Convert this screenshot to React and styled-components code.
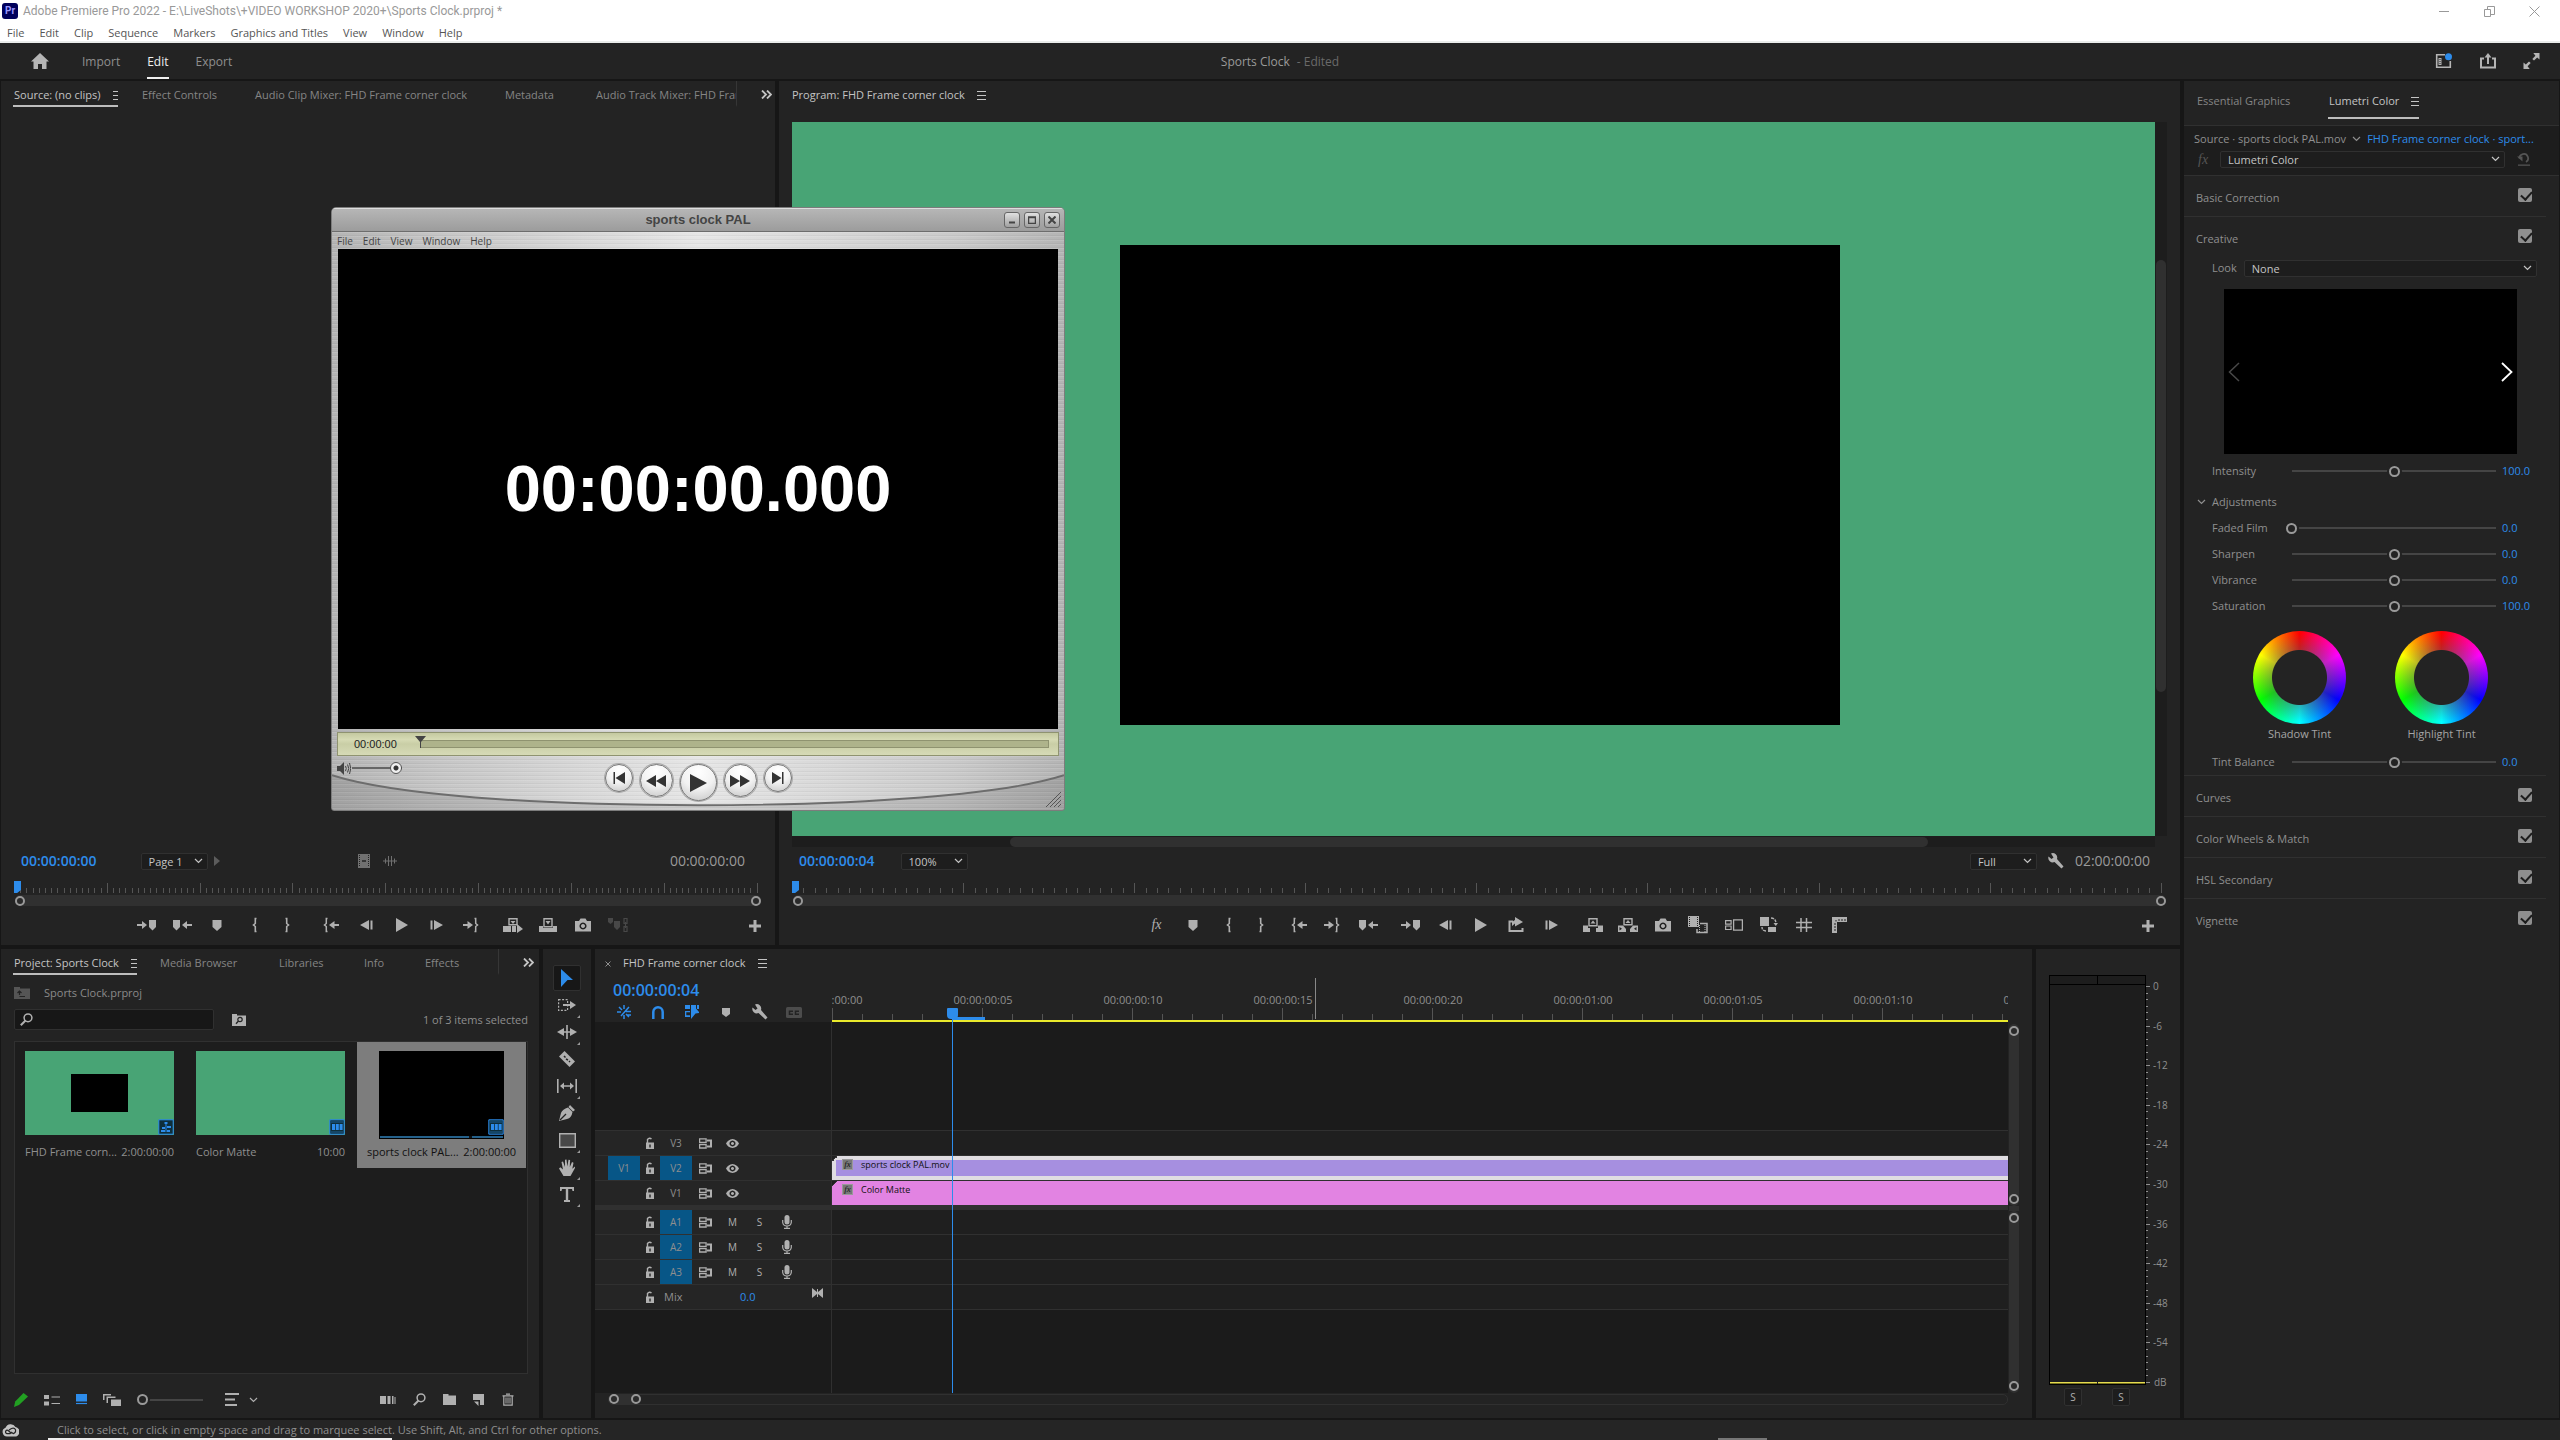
import { Fragment } from 'react';
import styled, { createGlobalStyle, css } from 'styled-components';

const BLUE = '#2d8ceb';
const PANEL = '#232323';
const DARK = '#1d1d1d';
const LINE = '#303030';
const GREEN = '#48a475';

/* ---------- icons: [width, height, drawing] ---------- */

const arrowRight = 'M0 7h5V4l5 4-5 4V9H0z';
const arrowLeft = 'M20 7h-5V4l-5 4 5 4V9h5z';

const ICONS = {
  menu: [9, 9, <path d="M0 .5h9M0 4.5h9M0 8.5h9" stroke="currentColor" />],
  more: [11, 9, <path d="M1 .5l4 4-4 4M6 .5l4 4-4 4" fill="none" stroke="currentColor" strokeWidth="1.8" />],
  chevron: [9, 6, <path d="M1 1l3.5 3.5L8 1" fill="none" stroke="currentColor" strokeWidth="1.2" />],
  home: [18, 16, <path d="M9 0L0 8.5h2.5V16H7v-5h4v5h4.5V8.5H18z" />],
  workspaces: [18, 16, <><path d="M10 1.7H1.7v12.6h13.6V8" fill="none" stroke="currentColor" strokeWidth="1.6" /><path d="M3.5 5h3v7h-3z" /><path d="M5 6v1M5 8v1M5 10v1" stroke="#232323" /><circle cx="13.5" cy="3.8" r="3.5" fill={BLUE} /></>],
  share: [18, 16, <><path d="M5 5.5H2v9h14v-9h-3" fill="none" stroke="currentColor" strokeWidth="2" /><path d="M8 3.5h2V11H8z" /><path d="M9 0l3.5 4.5h-7z" /></>],
  fullscreen: [17, 16, <><path d="M16.500 0v6.500L14.200 4.400 11 7.500 9.300 5.900l3.100-3.200L10.300 0z" /><path d="M.5 16V9.500l2.300 2.100L6 8.500l1.700 1.600-3.100 3.200L6.700 16z" /></>],
  minimize: [11, 11, <path d="M0 5.5h10" stroke="currentColor" />],
  restore: [11, 11, <path d="M.5 3.5h6v7h-6zM3.5 3V.5h7v8H7" fill="none" stroke="currentColor" />],
  close: [11, 11, <path d="M.5.5l10 10M10.5.5l-10 10" fill="none" stroke="currentColor" />],
  smallClose: [6, 6, <path d="M.5.5l5 5M5.5.5l-5 5" fill="none" stroke="currentColor" />],
  film: [12, 14, <><path d="M0 0h12v14H0z" /><path d="M1.500 1v12M10.500 1v12" stroke="#232323" strokeDasharray="1 1" /><path d="M4 7h4" stroke="#232323" strokeWidth="1.5" /></>],
  wave: [14, 12, <path d="M0 6h14M2.5 3.5v5M5.5 1v10M8.5 1v10M11.5 3.5v5" stroke="currentColor" />],
  playSmall: [6, 10, <path d="M0 0l6 5-6 5z" />],
  marker: [10, 12, <path d="M.5 1h9v7L5 12 .5 8z" />],
  toMarker: [20, 16, <><path d={arrowRight} /><path d="M12 3h7v7l-3.5 3.5L12 10z" /></>],
  fromMarker: [20, 16, <><path d={arrowLeft} /><path d="M1 3h7v7l-3.5 3.5L1 10z" /></>],
  markIn: [6, 16, <path d="M4.5 1.5H3.3v5L1.5 8l1.8 1.5v5h1.2" fill="none" stroke="currentColor" strokeWidth="1.6" />],
  markOut: [6, 16, <path d="M1.5 1.5h1.2v5L4.5 8 2.7 9.5v5H1.5" fill="none" stroke="currentColor" strokeWidth="1.6" />],
  goIn: [16, 16, <><path d="M4.5 1.5H3.3v5L1.5 8l1.8 1.5v5h1.2" fill="none" stroke="currentColor" strokeWidth="1.5" /><path d="M16 7h-4.5V4L6 8l5.5 4V9H16z" /></>],
  goOut: [16, 16, <><path d="M11.5 1.5h1.2v5L14.5 8l-1.8 1.5v5h-1.2" fill="none" stroke="currentColor" strokeWidth="1.5" /><path d="M0 7h4.5V4L10 8l-5.5 4V9H0z" /></>],
  stepBack: [13, 12, <path d="M9 1v10L0 6zM10.5 1.5h2v9h-2z" />],
  play: [13, 14, <path d="M1 0l12 7-12 7z" />],
  stepForward: [13, 12, <path d="M4 1v10l9-5zM.5 1.5h2v9h-2z" />],
  insert: [20, 16, <><path d="M6 1.7h8v6H6z" fill="none" stroke="currentColor" strokeWidth="1.4" /><path d="M7.5 4h5L10 7z" /><path d="M0 9h8v6H0zM9 9h4v6H9zM14 7l6 5-6 4z" /></>],
  overwrite: [18, 16, <><path d="M5 1.7h8v8H5z" fill="none" stroke="currentColor" strokeWidth="1.4" /><path d="M6.5 4h5L9 7.5z" /><path d="M0 9h4v2h10V9h4v6H0z" /></>],
  camera: [16, 14, <path fillRule="evenodd" d="M0 3h4l1.5-2.5h5L12 3h4v10.5H0zM8 4.5a3.5 3.5 0 1 0 .01 0zM8 6a2 2 0 1 1-.01 0z" />],
  linkMarkers: [20, 16, <><path d="M0 1h5v4L2.5 7 0 5zM6 4h6v6l-3 3-3-3z" /><path d="M16 1.5h3v5h-3zM16 9.5h3v5h-3zM17.5 5v6" fill="none" stroke="currentColor" strokeWidth="1.2" /></>],
  plus: [12, 12, <path d="M4.5 0h3v4.5H12v3H7.5V12h-3V7.5H0v-3h4.5z" />],
  lift: [20, 16, <><path d="M6 1.7h8v7H6z" fill="none" stroke="currentColor" strokeWidth="1.4" /><path d="M7.5 6.5h5L10 3.5z" /><path d="M0 8.5h5V11h2v4H0zM15 8.5h5V15h-7v-4h2z" /></>],
  extract: [20, 16, <><path d="M6 1.7h8v6H6z" fill="none" stroke="currentColor" strokeWidth="1.4" /><path d="M7.5 6h5L10 3z" /><path fillRule="evenodd" d="M0 8.5h5L8 12v3H0zM1.5 10v3.5L4 11.700zM20 8.5h-5L12 12v3h8zM18.5 10v3.5L16 11.700z" /></>],
  exportClip: [16, 15, <><path d="M5 4.5H1.5V14h13v-3" fill="none" stroke="currentColor" strokeWidth="2" /><path d="M7 0l8 5-8 4.5V6.500L4 9V5l3-2z" /></>],
  proxies: [20, 18, <><path d="M0 0h11v11H0z" /><path d="M1.5 1v9M9.5 1v9" stroke="#232323" strokeDasharray="1 1" /><path d="M12 7.5h7v9h-10V13" fill="none" stroke="currentColor" strokeWidth="1.5" /><path d="M11.5 9v7M17 9v7" stroke="currentColor" strokeDasharray="1 1" /></>],
  comparison: [18, 12, <><path d="M.6 1.600h5.500v3.500H.6zM.6 7h5.500v3.500H.6z" fill="none" stroke="currentColor" strokeWidth="1.2" /><path d="M8.600.8h8.800v10.400H8.600z" fill="none" stroke="currentColor" strokeWidth="1.3" /></>],
  toggleProxy: [18, 17, <><path d="M0 1h9v9H0zM8 11h8v5H8z" /><path d="M11 2q5 0 5 6M6 15q-4 0-4-4" fill="none" stroke="currentColor" strokeWidth="1.4" strokeDasharray="3 1" /><path d="M13.5 7h4.5l-2.200 3z" /></>],
  guides: [16, 16, <path d="M5 1v14M10.5 1v14M0 5.5h16M0 10.5h16" stroke="currentColor" strokeWidth="1.5" />],
  ruler: [16, 16, <><path d="M1 0h15v5H6v11H1z" /><path d="M5 3v1.5M8 2v2M11 2v2M14 2v2M3 7h2M3 10h2M3 13h2" stroke="#232323" /></>],
  wrench: [16, 16, <path d="M3 .5a4.5 4.5 0 0 1 6 5.500l6.500 7.500-2 2L6.500 9A4.500 4.500 0 0 1 .5 3.500l3 2.500 2-1.500z" />],
  reset: [14, 13, <><path d="M2.5 5.500A4.300 4.300 0 1 1 9 9" fill="none" stroke="currentColor" strokeWidth="1.8" /><path d="M0 3.500h5.500V8.500zM1 11.500h12v1.300H1z" /></>],
  prev: [12, 20, <path d="M11 1L1.5 10 11 19" fill="none" stroke="currentColor" strokeWidth="1.5" />],
  next: [12, 20, <path d="M1 1l9.5 9L1 19" fill="none" stroke="currentColor" strokeWidth="1.8" />],
  folderUp: [16, 12, <><path d="M0 0h6v1.5h10V12H0z" /><path d="M5.5 8V4.5M3.5 6l2-2 2 2M5.5 9.5H11" fill="none" stroke="#232323" strokeWidth="1.2" /></>],
  search: [13, 13, <><circle cx="8" cy="4.8" r="3.9" fill="none" stroke="currentColor" strokeWidth="1.5" /><path d="M5.5 7.500L.8 12.200" stroke="currentColor" strokeWidth="2" /></>],
  folderSearch: [14, 12, <><path d="M0 0h5v1.5h9V12H0z" /><circle cx="8" cy="5.5" r="2.2" fill="none" stroke="#232323" strokeWidth="1.2" /><path d="M6.5 7L4 9.700" stroke="#232323" strokeWidth="1.3" /></>],
  folder: [13, 11, <path d="M0 0h5.5v1.5H13V11H0z" />],
  pencil: [14, 14, <path fill="#22a022" d="M9.5 0L14 3.5 5 12l-5 2 1.2-5.5z" />],
  listView: [16, 12, <><path d="M0 1h5v4H0zM0 7.5h5v4H0z" /><path d="M7.5 3H16M7.5 9.5H16" stroke="currentColor" strokeWidth="1.2" /></>],
  iconView: [11, 11, <><path d="M0 0h11v7.5H0z" /><path d="M0 9.5h11" stroke="currentColor" strokeWidth="1.2" /></>],
  freeform: [18, 12, <path d="M0 0h8v1.500H1.500V6H0zM3.500 2.500h9V4h-7.500v5H3.500zM8 5.500h10V12H8z" />],
  sort: [14, 13, <path d="M0 1h14M0 6.500h10M0 12h12" stroke="currentColor" strokeWidth="2" />],
  automate: [16, 10, <path d="M0 1h6v8H0zM7.5 1h3v8h-3zM12 1h1.5v8H12zM14.500 2h1v7h-1z" />],
  newItem: [12, 12, <path d="M0 0h11v11H7V6H0zM1 7.5h4.5V12z" />],
  trash: [12, 13, <><path d="M4 1.200h4M.5 2.800h11M1.800 3v9.200h8.400V3" fill="none" stroke="currentColor" strokeWidth="1.2" /><path d="M4 4.5v6M6 4.5v6M8 4.5v6" stroke="currentColor" /></>],
  seqBadge: [16, 16, <><path d="M.8.8h14.400v14.400H.8z" fill="#0e2f3b" stroke={BLUE} /><path fill={BLUE} d="M6.500 3h3v2h-3zM7.500 5h1v8h-1zM4 8h3v2H4zM9 7h4v2H9zM3 11h4v2H3zM9 11h3v2H9z" /></>],
  clipBadge: [16, 16, <><path d="M.8.8h14.400v14.400H.8z" fill="#0e2f3b" stroke={BLUE} /><path fill={BLUE} d="M3 5h3v6H3zM6.800 5h3v6h-3zM10.600 5h3v6h-3z" /><path d="M2.500 3h11M2.500 13h11" stroke={BLUE} strokeDasharray="1 1" /></>],
  selection: [12, 18, <path d="M0 0l12 11H6.5L0 18z" />],
  trackSelect: [18, 12, <><path d="M.6.6h9v10.800h-9z" fill="none" stroke="currentColor" strokeDasharray="2 1.5" strokeWidth="1.2" /><path d="M5 5h7V2l6 4-6 4V7H5z" /></>],
  ripple: [20, 14, <><path d="M9.200 0h1.600v14H9.200zM7 3v8L0 7zM13 3v8l7-4z" /><path d="M5 7h10" stroke="currentColor" strokeWidth="1.5" /></>],
  razor: [16, 16, <><path d="M5.500 0L16 10.500 10.500 16 0 5.500z" /><path d="M5 5l1.500 1.500M7 8l2 1M10 10l1 1" stroke="#232323" strokeWidth="1.5" /></>],
  slip: [20, 14, <><path d="M.8 0v14M19.200 0v14" stroke="currentColor" strokeWidth="1.6" /><path d="M3 7l4-3.500v2.700h6V3.500L17 7l-4 3.500V7.800H7v2.700z" /></>],
  pen: [16, 16, <><path d="M11 0l5 5-2 1.500-4.500-4.500zM9 2.500L13.500 7q-1 6-5.500 7L0 16l2-8q1.500-4 7-5.500z" /><path d="M1 15l6-6" stroke="#232323" strokeWidth="1.2" /></>],
  rectangle: [17, 15, <path d="M.7.7h15.600v13.600H.7z" fill="#484848" stroke="currentColor" strokeWidth="1.4" />],
  hand: [16, 17, <path d="M4.500 17L0 9.500 1.300 8.300 4 10.500 2.500 3l1.500-.6 2 5.600V.8L7.500.5 8.300 7.500 9.500.8l1.600.3-.3 7L13 3l1.500.7-1.200 6L16 7.500V9l-4.500 8z" />],
  type: [14, 15, <path d="M0 0h14v4h-1.500L12 2H8.200v11H10v2H4v-2h1.800V2H2l-.5 2H0z" />],
  nest: [14, 14, <path d="M7 0v4M7 10v4M0 7h4M9 6.500h5M2 2l3 3M12 2L4 11M9 9l3 3M10 10h4" stroke="currentColor" strokeWidth="1.5" />],
  magnet: [12, 13, <path d="M1.300 13V6a4.700 4.700 0 0 1 9.400 0v7" fill="none" stroke="currentColor" strokeWidth="2.5" />],
  linked: [14, 14, <><path d="M0 0h5v4H0zM0 6h5v1.300H1.300v3H5V12H0zM12 0h2v4h-2z" /><path d="M6 0h5v3.500L14 7v1l-3.500.5L6 14z" /></>],
  shield: [8, 9, <path d="M0 0h8v6L4 9 0 6z" />],
  captions: [16, 11, <><rect width="16" height="11" rx="1.5" /><path d="M7 4.200H3.500v3H7M13 4.200H9.500v3H13" fill="none" stroke="#232323" strokeWidth="1.5" /></>],
  lock: [8, 12, <><path d="M1.500 6V2.500Q3.500.2 5.500 2" fill="none" stroke="currentColor" strokeWidth="1.4" /><path fillRule="evenodd" d="M0 5.500h8V12H0zM3.300 7.500v3h1.400v-3z" /></>],
  sync: [13, 11, <><path d="M.6.9h6.500v3.500H.6zM.6 6.500h6.500V10H.6z" fill="none" stroke="currentColor" strokeWidth="1.3" /><path d="M8 2.500h4v6H8" fill="none" stroke="currentColor" strokeWidth="2" /></>],
  eye: [13, 9, <path fillRule="evenodd" d="M6.500 0Q11 .5 13 4.500 11 8.500 6.500 9 2 8.500 0 4.500 2 .5 6.500 0zm0 1.500a3 3 0 1 0 .01 0zm0 1.500a1.500 1.500 0 1 1-.01 0z" />],
  mic: [10, 14, <><rect x="2.5" width="5" height="9.5" rx="2.5" /><path d="M.7 5v2.500q.5 3.500 4.300 3.500t4.300-3.500V5M5 11v2M2 13.300h6" fill="none" stroke="currentColor" strokeWidth="1.2" /></>],
  bowtie: [11, 10, <path d="M0 0l5 4V1h1v3l5-4v10L6 6v3H5V6l-5 4z" />],
  cloud: [17, 14, <><path d="M5 13.500a4.500 4.500 0 0 1-1.500-8.700A5.500 5.500 0 0 1 13.500 4 4.800 4.800 0 0 1 12 13.500z" /><path d="M9 10L6.500 7.700Q4.800 6.500 3.700 8q-.6 2 1.300 2.700h3L10 9.500M7 7l2.500-1.500q3-1 4 1.200.7 3-2.300 3.900l-2-1.600" fill="none" stroke="#252525" strokeWidth="1.2" /></>],
  speaker: [14, 13, <><path d="M0 4h3l4-4v13L3 9H0z" /><path d="M8.500 4q1.500 2.500 0 5M10.500 2.500q2.500 4 0 8M12.500 1q2.500 5.500 0 11" fill="none" stroke="currentColor" /></>],
  qtStart: [12, 12, <path d="M.5 0H2v12H.5zM12 0v12L2.500 6z" />],
  qtRewind: [20, 12, <path d="M10 0v12L0 6zM20 0v12L10 6z" />],
  qtPlay: [17, 18, <path d="M0 0l17 9-17 9z" />],
  qtForward: [20, 12, <path d="M0 0v12l10-6zM10 0v12l10-6z" />],
  qtEnd: [12, 12, <path d="M10 0h1.500v12H10zM0 0v12l9.500-6z" />],
};

const Icon = ({ name }) => {
  const [w, h, drawing] = ICONS[name];
  return (
    <Glyph width={w} height={h} viewBox={`0 0 ${w} ${h}`} fill="currentColor" aria-hidden="true">
      {drawing}
    </Glyph>
  );
};

const Dropdown = ({ label, value, width }) => (
  <SelectBox $width={width}>
    <select aria-label={label} defaultValue={value}>
      <option>{value}</option>
    </select>
    <Icon name="chevron" />
  </SelectBox>
);

const Ruler = () => (
  <RulerBox>
    <PlayheadFlag />
    {Array.from({ length: 120 }, (_, i) => (
      <RulerTick key={i} $major={i % 15 === 0 && i > 0} />
    ))}
    <LastTick />
  </RulerBox>
);

const Transport = ({ items }) => (
  <TransportBar>
    <TransportKeys>
      {items.map(([name, gap = 11]) => (
        <TransportButton key={name} type="button" aria-label={name} $gap={gap} $dim={name === 'linkMarkers'}>
          {name === 'fx' ? <FxText>fx</FxText> : <Icon name={name} />}
        </TransportButton>
      ))}
    </TransportKeys>
    <PlusButton type="button" aria-label="Button editor">
      <Icon name="plus" />
    </PlusButton>
  </TransportBar>
);

/* ---------- header ---------- */

const TitleBar = () => (
  <WindowTop>
    <WindowTitle>
      <Logo>Pr</Logo>
      <span>Adobe Premiere Pro 2022 - E:\LiveShots\+VIDEO WORKSHOP 2020+\Sports Clock.prproj *</span>
      <WindowButtons>
        {['minimize', 'restore', 'close'].map((n) => (
          <button key={n} type="button" aria-label={n}>
            <Icon name={n} />
          </button>
        ))}
      </WindowButtons>
    </WindowTitle>
    <MenuRow>
      {['File', 'Edit', 'Clip', 'Sequence', 'Markers', 'Graphics and Titles', 'View', 'Window', 'Help'].map((m) => (
        <button key={m} type="button">{m}</button>
      ))}
    </MenuRow>
  </WindowTop>
);

const Header = () => (
  <HeaderBar>
    <HeaderNav>
      <HomeButton type="button" aria-label="Home"><Icon name="home" /></HomeButton>
      <NavButton type="button">Import</NavButton>
      <NavButton type="button" $active>Edit</NavButton>
      <NavButton type="button">Export</NavButton>
    </HeaderNav>
    <ProjectTitle>Sports Clock <span>- Edited</span></ProjectTitle>
    <HeaderActions>
      {['workspaces', 'share', 'fullscreen'].map((n) => (
        <button key={n} type="button" aria-label={n}><Icon name={n} /></button>
      ))}
    </HeaderActions>
  </HeaderBar>
);

/* ---------- monitors ---------- */

const SOURCE_KEYS = [
  ['toMarker', 0], ['fromMarker'], ['marker'], ['markIn', 14], ['markOut', 8], ['goIn', 20], ['stepBack'],
  ['play'], ['stepForward'], ['goOut'], ['insert', 18], ['overwrite'], ['camera'], ['linkMarkers'],
];

const PROGRAM_KEYS = [
  ['fx', 0], ['marker', 12], ['markIn', 12], ['markOut', 8], ['goIn', 14], ['goOut', 9], ['fromMarker', 12],
  ['toMarker', 19], ['stepBack'], ['play'], ['exportClip'], ['stepForward', 12], ['lift', 17], ['extract'],
  ['camera'], ['proxies'], ['comparison', 12], ['toggleProxy'], ['guides'], ['ruler'],
];

const SourceMonitor = () => (
  <SourcePanel>
    <TabBar $cols="128px 113px 250px 91px 142px 1fr">
      <Tab type="button" $active $width={105}>Source: (no clips) <Icon name="menu" /></Tab>
      <Tab type="button">Effect Controls</Tab>
      <Tab type="button">Audio Clip Mixer: FHD Frame corner clock</Tab>
      <Tab type="button">Metadata</Tab>
      <Tab type="button" $cut>Audio Track Mixer: FHD Frame</Tab>
      <MoreTabs type="button" aria-label="More panels"><Icon name="more" /></MoreTabs>
    </TabBar>
    <Filler />
    <MonitorRow>
      <Timecode $blue>00:00:00:00</Timecode>
      <PageGroup>
        <Dropdown label="Page" value="Page 1" width={67} />
        <Icon name="playSmall" />
      </PageGroup>
      <DragIcons>
        <Icon name="film" />
        <Icon name="wave" />
      </DragIcons>
      <Timecode>00:00:00:00</Timecode>
    </MonitorRow>
    <Ruler />
    <ZoomBar><Ring /><Ring /></ZoomBar>
    <Transport items={SOURCE_KEYS} />
  </SourcePanel>
);

const ProgramMonitor = () => (
  <ProgramPanel>
    <TabBar $cols="max-content 1fr">
      <Tab type="button" $bright>Program: FHD Frame corner clock <Icon name="menu" /></Tab>
    </TabBar>
    <Viewer>
      <Canvas><VideoFrame /></Canvas>
      <VerticalScroll><i /></VerticalScroll>
      <HorizontalScroll><i /></HorizontalScroll>
    </Viewer>
    <MonitorRow>
      <Timecode $blue>00:00:00:04</Timecode>
      <ZoomSelect><Dropdown label="Zoom" value="100%" width={67} /></ZoomSelect>
      <ProgramRight>
        <Dropdown label="Resolution" value="Full" width={67} />
        <Icon name="wrench" />
        <Timecode>02:00:00:00</Timecode>
      </ProgramRight>
    </MonitorRow>
    <Ruler />
    <ZoomBar><Ring /><Ring /></ZoomBar>
    <Transport items={PROGRAM_KEYS} />
  </ProgramPanel>
);

/* ---------- project ---------- */

const BINS = [
  { name: 'FHD Frame corn...', time: '2:00:00:00', badge: 'seqBadge', kind: 'sequence' },
  { name: 'Color Matte', time: '10:00', badge: 'clipBadge', kind: 'matte' },
  { name: 'sports clock PAL...', time: '2:00:00:00', badge: 'clipBadge', kind: 'video', selected: true },
];

const Project = () => (
  <ProjectPanel>
    <TabBar $cols="146px 119px 85px 61px 75px 1fr">
      <Tab type="button" $active $width={124}>Project: Sports Clock <Icon name="menu" /></Tab>
      <Tab type="button">Media Browser</Tab>
      <Tab type="button">Libraries</Tab>
      <Tab type="button">Info</Tab>
      <Tab type="button" $cut>Effects</Tab>
      <MoreTabs type="button" aria-label="More panels"><Icon name="more" /></MoreTabs>
    </TabBar>
    <BinPath><Icon name="folderUp" />Sports Clock.prproj</BinPath>
    <SearchRow>
      <SearchBox>
        <Icon name="search" />
        <input type="text" aria-label="Search project" />
      </SearchBox>
      <Icon name="folderSearch" />
      <ItemCount>1 of 3 items selected</ItemCount>
    </SearchRow>
    <BinArea>
      {BINS.map((b) => (
        <BinCard key={b.name} $selected={b.selected}>
          <Thumb $kind={b.kind}>
            {b.kind === 'sequence' && <InnerFrame />}
            <Badge $raised={b.selected}><Icon name={b.badge} /></Badge>
          </Thumb>
          <CardLabel $close={b.selected}><span>{b.name}</span><time>{b.time}</time></CardLabel>
        </BinCard>
      ))}
    </BinArea>
    <ProjectFooter>
      <Icon name="pencil" />
      <FootButton type="button" aria-label="List view"><Icon name="listView" /></FootButton>
      <FootButton type="button" aria-label="Icon view" $on><Icon name="iconView" /></FootButton>
      <FootButton type="button" aria-label="Freeform view"><Icon name="freeform" /></FootButton>
      <Slider type="range" aria-label="Thumbnail size" defaultValue={0} $width={72} />
      <SortGroup type="button" aria-label="Sort"><Icon name="sort" /><Icon name="chevron" /></SortGroup>
      <FootTools>
        {['automate', 'search', 'folder', 'newItem', 'trash'].map((n) => (
          <FootButton key={n} type="button" aria-label={n}><Icon name={n} /></FootButton>
        ))}
      </FootTools>
    </ProjectFooter>
  </ProjectPanel>
);

const TOOLS = ['selection', 'trackSelect', 'ripple', 'razor', 'slip', 'pen', 'rectangle', 'hand', 'type'];

const Tools = () => (
  <ToolPanel>
    {TOOLS.map((t) => (
      <ToolButton
        key={t}
        type="button"
        aria-label={t}
        $active={t === 'selection'}
        $corner={!['selection', 'razor', 'pen'].includes(t)}
      >
        <Icon name={t} />
      </ToolButton>
    ))}
  </ToolPanel>
);

/* ---------- timeline ---------- */

const LABELS = ['00:00:00:00', '00:00:00:05', '00:00:00:10', '00:00:00:15', '00:00:00:20', '00:00:01:00', '00:00:01:05', '00:00:01:10', '00:00:01:15'];

const TrackHead = ({ name, source, audio, on }) => (
  <HeadRow>
    <Patch type="button" $on={!!source}>{source}</Patch>
    <Icon name="lock" />
    <Patch type="button" $on={on}>{name}</Patch>
    <Icon name="sync" />
    {audio ? (
      <>
        <MiniButton type="button">M</MiniButton>
        <MiniButton type="button">S</MiniButton>
        <Icon name="mic" />
      </>
    ) : (
      <Icon name="eye" />
    )}
  </HeadRow>
);

const Clip = ({ label, selected }) => (
  <ClipBar $selected={selected}>
    <FxBadge>fx</FxBadge>
    {label}
  </ClipBar>
);

const Timeline = () => (
  <TimelinePanel>
    <TimelineTab>
      <button type="button" aria-label="Close sequence"><Icon name="smallClose" /></button>
      <Tab type="button" $bright>FHD Frame corner clock <Icon name="menu" /></Tab>
    </TimelineTab>
    <TimelineBody>
      <HeadColumn>
        <TimelineTop>
          <Timecode $blue $big>00:00:00:04</Timecode>
          <TimelineButtons>
            {['nest', 'magnet', 'linked', 'shield', 'wrench', 'captions'].map((n, i) => (
              <TimelineButton key={n} type="button" aria-label={n} $on={i < 3} $dim={i === 5}>
                <Icon name={n} />
              </TimelineButton>
            ))}
          </TimelineButtons>
        </TimelineTop>
        <HeadHalf $bottom>
          <TrackHead name="V3" />
          <TrackHead name="V2" source="V1" on />
          <TrackHead name="V1" />
        </HeadHalf>
        <Splitter />
        <HeadHalf>
          <TrackHead name="A1" audio on />
          <TrackHead name="A2" audio on />
          <TrackHead name="A3" audio on />
          <MixRow>
            <Icon name="lock" />
            <span>Mix</span>
            <b>0.0</b>
            <Icon name="bowtie" />
          </MixRow>
        </HeadHalf>
      </HeadColumn>
      <LaneColumn>
        <TimeRuler>
          <RulerLabels>{LABELS.map((l) => <span key={l}>{l}</span>)}</RulerLabels>
          <RulerTicks>{Array.from({ length: 40 }, (_, i) => <TimeTick key={i} $major={i % 5 === 0} />)}</RulerTicks>
        </TimeRuler>
        <LaneHalf $bottom>
          <Lane />
          <Lane><Clip label="sports clock PAL.mov" selected /></Lane>
          <Lane><Clip label="Color Matte" /></Lane>
        </LaneHalf>
        <Splitter />
        <LaneHalf><Lane /><Lane /><Lane /><Lane /></LaneHalf>
        <HoverLine />
        <PlayRange />
        <TimePlayhead />
      </LaneColumn>
      <ScrollColumn>
        <TrackScroll><Ring /><Ring /></TrackScroll>
        <Splitter />
        <TrackScroll><Ring /><Ring /></TrackScroll>
      </ScrollColumn>
    </TimelineBody>
    <TimelineScroll><div><Ring /><Ring /></div></TimelineScroll>
  </TimelinePanel>
);

const Meters = () => (
  <MeterPanel>
    <MeterArea>
      <MeterBox>
        <MeterPeaks><i /><i /></MeterPeaks>
        <MeterBase><i /><i /></MeterBase>
      </MeterBox>
      <MeterScale>
        {['0', '-6', '-12', '-18', '-24', '-30', '-36', '-42', '-48', '-54'].map((d) => (
          <ScaleStep key={d}>
            <span>{d}</span>
            {Array.from({ length: 6 }, (_, i) => <ScaleTick key={i} $major={i === 0} />)}
          </ScaleStep>
        ))}
        <ScaleEnd><ScaleTick $major />dB</ScaleEnd>
      </MeterScale>
    </MeterArea>
    <SoloRow>
      <button type="button">S</button>
      <button type="button">S</button>
    </SoloRow>
  </MeterPanel>
);

/* ---------- lumetri ---------- */

const SectionHead = ({ title, last }) => (
  <Section as="label" $last={last}>
    <span>{title}</span>
    <Check type="checkbox" defaultChecked />
  </Section>
);

const Control = ({ label, value, at = 50 }) => (
  <ControlRow>
    <label htmlFor={label}>{label}</label>
    <Slider id={label} type="range" defaultValue={at} $width={216} />
    <output>{value}</output>
  </ControlRow>
);

const Lumetri = () => (
  <LumetriPanel>
    <TabBar $cols="132px 1fr" $tall>
      <Tab type="button">Essential Graphics</Tab>
      <Tab type="button" $active $width={91}>Lumetri Color <Icon name="menu" /></Tab>
    </TabBar>
    <ClipSource>
      <SourceLine>
        <span>Source · sports clock PAL.mov</span>
        <Icon name="chevron" />
        <a href="#clip">FHD Frame corner clock · sport...</a>
      </SourceLine>
      <EffectLine>
        <FxText>fx</FxText>
        <Dropdown label="Effect" value="Lumetri Color" width={285} />
        <Icon name="reset" />
      </EffectLine>
    </ClipSource>
    <SectionHead title="Basic Correction" />
    <CreativeSection>
      <SectionHead title="Creative" last />
      <LookRow>
        <span>Look</span>
        <Dropdown label="Look" value="None" width={293} />
      </LookRow>
      <Preview>
        <button type="button" aria-label="Previous look"><Icon name="prev" /></button>
        <button type="button" aria-label="Next look"><Icon name="next" /></button>
      </Preview>
      <Control label="Intensity" value="100.0" />
      <AdjustTitle type="button"><Icon name="chevron" />Adjustments</AdjustTitle>
      <Control label="Faded Film" value="0.0" at={0} />
      <Control label="Sharpen" value="0.0" />
      <Control label="Vibrance" value="0.0" />
      <Control label="Saturation" value="100.0" />
      <Wheels>
        {['Shadow Tint', 'Highlight Tint'].map((w) => (
          <figure key={w}><Wheel /><figcaption>{w}</figcaption></figure>
        ))}
      </Wheels>
      <Control label="Tint Balance" value="0.0" />
    </CreativeSection>
    <SectionHead title="Curves" />
    <SectionHead title="Color Wheels & Match" />
    <SectionHead title="HSL Secondary" />
    <SectionHead title="Vignette" last />
  </LumetriPanel>
);

/* ---------- floating player ---------- */

const Player = () => (
  <PlayerWindow>
    <PlayerTitle>
      <span>sports clock PAL</span>
      <PlayerButtons>
        <button type="button" aria-label="Minimize"><svg width="8" height="8"><path d="M1 6.5h6" stroke="#444" strokeWidth="2" /></svg></button>
        <button type="button" aria-label="Maximize"><svg width="8" height="8"><path d="M.5 1.5h7v6h-7zM0 1h8" fill="none" stroke="#444" strokeWidth="1.5" /></svg></button>
        <button type="button" aria-label="Close"><svg width="8" height="8"><path d="M.5.5l7 7M7.5.5l-7 7" stroke="#444" strokeWidth="2" /></svg></button>
      </PlayerButtons>
    </PlayerTitle>
    <PlayerMenu>
      {['File', 'Edit', 'View', 'Window', 'Help'].map((m) => <button key={m} type="button">{m}</button>)}
    </PlayerMenu>
    <PlayerScreen>00:00:00.000</PlayerScreen>
    <PlayerLcd>
      <span>00:00:00</span>
      <div><svg width="11" height="12" viewBox="0 0 11 12"><path d="M0 0h11L6 6v6H5V6z" fill="#444" /></svg></div>
    </PlayerLcd>
    <PlayerFoot>
      <FootCurve viewBox="0 0 734 56" preserveAspectRatio="none">
        <path d="M0 20C60 40 200 51 367 51S674 40 734 20V56H0z" fill="#000" fillOpacity=".1" />
        <path d="M0 20C60 40 200 51 367 51S674 40 734 20" fill="none" stroke="#6d6d6d" strokeWidth="2" />
      </FootCurve>
      <Volume>
        <Icon name="speaker" />
        <input type="range" aria-label="Volume" defaultValue={100} />
      </Volume>
      <PlayerKeys>
        {[['qtStart', 28], ['qtRewind', 33], ['qtPlay', 37], ['qtForward', 33], ['qtEnd', 28]].map(([n, s]) => (
          <RoundButton key={n} type="button" aria-label={n} $size={s}><Icon name={n} /></RoundButton>
        ))}
      </PlayerKeys>
      <Grip width="16" height="16"><path d="M1 16L16 1M5 16L16 5M9 16l7-7M13 16l3-3" stroke="#555" /></Grip>
    </PlayerFoot>
  </PlayerWindow>
);

const App = () => (
  <Fragment>
    <GlobalStyle />
    <Shell>
      <TitleBar />
      <Header />
      <Workspace>
        <LeftArea>
          <TopRow>
            <SourceMonitor />
            <ProgramMonitor />
          </TopRow>
          <BottomRow>
            <Project />
            <Tools />
            <Timeline />
            <Meters />
          </BottomRow>
        </LeftArea>
        <Lumetri />
      </Workspace>
      <StatusBar>
        <Icon name="cloud" />
        <span>Click to select, or click in empty space and drag to marquee select. Use Shift, Alt, and Ctrl for other options.</span>
        <TaskEdge />
      </StatusBar>
      <Player />
    </Shell>
  </Fragment>
);

/* ---------- styles ---------- */

const GlobalStyle = createGlobalStyle`
  * { box-sizing: border-box; }
  body {
    margin: 0;
    background: #161616;
    color: #8f8f8f;
    font: 11px/16px "Open Sans", "Noto Sans", sans-serif;
    overflow: hidden;
  }
  button, input, select {
    font: inherit;
    color: inherit;
    background: none;
    border: 0;
    padding: 0;
    margin: 0;
  }
  i { font-style: normal; }
`;

const Glyph = styled.svg`
  display: block;
  flex: none;
`;

const Shell = styled.div`
  position: relative;
  display: flex;
  flex-direction: column;
  height: 100vh;
`;

const WindowTop = styled.header`
  flex: none;
  background: #fff;
  border-bottom: 2px solid #e9ecea;
  height: 43px;
`;

const WindowTitle = styled.div`
  display: flex;
  align-items: center;
  height: 22px;
  padding: 0 20px 0 2px;
  gap: 5px;
  color: #999;
  font: 12px/16px Roboto, sans-serif;
`;

const Logo = styled.b`
  width: 16px;
  height: 16px;
  border-radius: 3px;
  background: #00005b;
  color: #9999ff;
  font-size: 10px;
  text-align: center;
`;

const WindowButtons = styled.div`
  display: flex;
  gap: 34px;
  margin-left: auto;
`;

const MenuRow = styled.nav`
  display: flex;
  gap: 15px;
  padding-left: 7px;
  height: 22px;
  color: #555;
`;

const HeaderBar = styled.div`
  flex: none;
  display: grid;
  grid-template-columns: 1fr auto 1fr;
  height: 36px;
  align-items: center;
  background: ${PANEL};
  font-size: 12px;
`;

const HeaderNav = styled.nav`
  display: flex;
  align-self: stretch;
  gap: 27px;
  padding-left: 31px;
`;

const HomeButton = styled.button`
  color: #b5b5b5;
  width: 24px;
`;

const NavButton = styled.button`
  padding: 4px 0 0;
  border-bottom: 2px solid transparent;
  ${({ $active }) => $active && css`
    color: #f0f0f0;
    border-color: #f0f0f0;
  `}
`;

const ProjectTitle = styled.div`
  display: flex;
  gap: 7px;
  padding-top: 2px;
  color: #9a9a9a;
  span { color: #6a6a6a; }
`;

const HeaderActions = styled.div`
  display: flex;
  justify-content: flex-end;
  gap: 26px;
  padding-right: 20px;
  color: #b5b5b5;
`;

const Workspace = styled.main`
  flex: 1;
  min-height: 0;
  display: flex;
  gap: 4px;
  padding: 2px 1px;
`;

const LeftArea = styled.div`
  flex: 1;
  min-width: 0;
  display: flex;
  flex-direction: column;
  gap: 4px;
`;

const TopRow = styled.div`
  flex: 864 1 0;
  min-height: 0;
  display: flex;
  gap: 4px;
`;

const BottomRow = styled.div`
  flex: 469 1 0;
  min-height: 0;
  display: flex;
  gap: 4px;
`;

const Panel = styled.section`
  display: flex;
  flex-direction: column;
  background: ${PANEL};
  min-width: 0;
`;

const SourcePanel = styled(Panel)` width: 774px; `;
const ProgramPanel = styled(Panel)` flex: 1; `;
const ProjectPanel = styled(Panel)` width: 538px; `;
const TimelinePanel = styled(Panel)` flex: 1; `;
const MeterPanel = styled(Panel)` width: 144px; `;
const LumetriPanel = styled(Panel)` width: 375px; `;

const TabBar = styled.div`
  flex: none;
  display: grid;
  grid-template-columns: ${({ $cols }) => $cols};
  height: ${({ $tall }) => ($tall ? 44 : 41)}px;
  grid-template-rows: ${({ $tall }) => ($tall ? 38 : 26)}px;
  padding-left: 12px;
`;

const Tab = styled.button`
  display: flex;
  align-items: center;
  justify-content: ${({ $width }) => ($width ? 'space-between' : 'flex-start')};
  gap: 12px;
  width: ${({ $width }) => ($width ? `${$width}px` : 'auto')};
  padding: 4px 0 0 1px;
  border-bottom: 2px solid ${({ $active }) => ($active ? '#bdbdbd' : 'transparent')};
  color: ${({ $active, $bright }) => ($active || $bright ? '#c4c4c4' : '#858585')};
  white-space: nowrap;
  overflow: hidden;
  ${({ $cut }) => $cut && css` border-right: 1px solid #363636; `}
`;

const MoreTabs = styled.button`
  display: flex;
  align-items: center;
  padding-left: 24px;
  color: #c4c4c4;
`;

const Filler = styled.div` flex: 1; `;

const MonitorRow = styled.div`
  flex: none;
  display: flex;
  align-items: center;
  height: 26px;
  margin: 1px 30px 7px 20px;
`;

const Timecode = styled.span`
  font-size: ${({ $big }) => ($big ? 16 : 14)}px;
  font-weight: ${({ $blue }) => ($blue ? 600 : 400)};
  line-height: 20px;
  color: ${({ $blue }) => ($blue ? BLUE : '#9a9a9a')};
`;

const PageGroup = styled.div`
  display: flex;
  align-items: center;
  gap: 6px;
  margin-left: 44px;
  color: #5c5c5c;
`;

const DragIcons = styled.div`
  display: flex;
  align-items: center;
  gap: 13px;
  margin: 0 auto 0 138px;
  color: #707070;
`;

const ZoomSelect = styled.div` margin-left: 26px; `;

const ProgramRight = styled.div`
  display: flex;
  align-items: center;
  gap: 11px;
  margin-left: auto;
  color: #b0b0b0;
`;

const SelectBox = styled.div`
  position: relative;
  width: ${({ $width }) => $width}px;
  height: 17px;
  color: #c4c4c4;
  select {
    display: block;
    appearance: none;
    width: 100%;
    height: 100%;
    padding: 0 18px 0 7px;
    line-height: 15px;
    background: ${DARK};
    border: 1px solid ${LINE};
    border-radius: 2px;
  }
  svg {
    position: absolute;
    right: 5px;
    top: 5px;
  }
`;

const RulerBox = styled.div`
  position: relative;
  flex: none;
  display: flex;
  align-items: flex-end;
  height: 12px;
  margin: 0 18px 2px 13px;
`;

const RulerTick = styled.i`
  flex: 1 1 0;
  height: ${({ $major }) => ($major ? 10 : 5)}px;
  border-left: 1px solid #555;
`;

const LastTick = styled.i`
  width: 1px;
  height: 10px;
  background: #555;
`;

const PlayheadFlag = styled.i`
  position: absolute;
  left: 0;
  top: 0;
  width: 7px;
  height: 12px;
  background: ${BLUE};
  clip-path: polygon(0 0, 100% 0, 100% 75%, 45% 100%, 0 100%);
`;

const ZoomBar = styled.div`
  flex: none;
  display: flex;
  justify-content: space-between;
  align-items: center;
  height: 11px;
  margin: 0 14px;
  border-radius: 5px;
  background: #303030;
`;

const Ring = styled.i`
  flex: none;
  width: 10px;
  height: 10px;
  border: 2px solid #999;
  border-radius: 50%;
  background: #2a2a2a;
`;

const TransportBar = styled.div`
  flex: none;
  position: relative;
  display: flex;
  justify-content: center;
  align-items: center;
  height: 39px;
  padding-bottom: 2px;
  color: #b0b0b0;
`;

const TransportKeys = styled.div`
  display: flex;
  padding-left: 36px;
  ${SourcePanel} & { padding: 0 11px 0 0; }
`;

const TransportButton = styled.button`
  display: flex;
  justify-content: center;
  align-items: center;
  width: 24px;
  height: 20px;
  margin-left: ${({ $gap }) => $gap}px;
  color: ${({ $dim }) => ($dim ? '#484848' : 'inherit')};
`;

const PlusButton = styled.button`
  position: absolute;
  right: 14px;
  top: 14px;
  ${ProgramPanel} & { right: 26px; }
`;

const FxText = styled.em`
  font: italic 14px/16px "Liberation Serif", serif;
`;

const Viewer = styled.div`
  flex: 1;
  min-height: 0;
  display: grid;
  grid-template-columns: 1fr 12px;
  grid-template-rows: 1fr 11px;
  margin: 0 13px;
`;

const Canvas = styled.div`
  display: flex;
  justify-content: center;
  align-items: center;
  background: ${GREEN};
  padding: 12px 0 0 13px;
`;

const VideoFrame = styled.div`
  width: 720px;
  height: 480px;
  background: #000;
`;

const VerticalScroll = styled.div`
  background: ${DARK};
  padding: 138px 1px 144px;
  i {
    display: block;
    height: 100%;
    border-radius: 5px;
    background: #303030;
  }
`;

const HorizontalScroll = styled.div`
  background: ${DARK};
  padding: 1px 227px 0 218px;
  i {
    display: block;
    height: 10px;
    border-radius: 5px;
    background: #303030;
  }
`;

const BinPath = styled.div`
  display: flex;
  align-items: center;
  gap: 14px;
  height: 18px;
  margin: -6px 13px 0;
  color: #8a8a8a;
  svg { color: #555; }
`;

const SearchRow = styled.div`
  display: flex;
  align-items: center;
  gap: 18px;
  height: 21px;
  margin: 7px 11px 0 13px;
  color: #b0b0b0;
`;

const SearchBox = styled.div`
  display: flex;
  align-items: center;
  gap: 6px;
  width: 200px;
  height: 21px;
  padding: 0 5px;
  background: #171717;
  border: 1px solid ${LINE};
  border-radius: 2px;
  input { flex: 1; min-width: 0; }
`;

const ItemCount = styled.span`
  margin-left: auto;
  color: #8f8f8f;
`;

const BinArea = styled.div`
  flex: 1;
  display: grid;
  grid-template-columns: repeat(3, 169px);
  align-items: start;
  gap: 2px;
  margin: 11px 11px 0 13px;
  background: ${DARK};
  border: 1px solid ${LINE};
`;

const BinCard = styled.article`
  height: 126px;
  padding: 9px 10px 0;
  background: ${({ $selected }) => ($selected ? '#7d7d7d' : 'transparent')};
  color: ${({ $selected }) => ($selected ? '#111' : '#8f8f8f')};
`;

const Thumb = styled.div`
  position: relative;
  display: flex;
  justify-content: center;
  align-items: center;
  height: 84px;
  background: ${GREEN};
  ${({ $kind }) => $kind === 'video' && css`
    height: 88px;
    margin: 0 12px;
    background: #000;
    &::after {
      content: "";
      position: absolute;
      inset: auto 1px 1px;
      height: 2px;
      background: linear-gradient(90deg, #24608a 72%, #111 72% 75%, #24608a 75%);
    }
  `}
`;

const InnerFrame = styled.div`
  width: 57px;
  height: 38px;
  background: #000;
`;

const Badge = styled.div`
  position: absolute;
  right: 0;
  bottom: ${({ $raised }) => ($raised ? 4 : 0)}px;
`;

const CardLabel = styled.div`
  display: flex;
  justify-content: space-between;
  margin-top: ${({ $close }) => ($close ? 5 : 9)}px;
  white-space: nowrap;
`;

const ProjectFooter = styled.div`
  flex: none;
  display: flex;
  align-items: center;
  gap: 16px;
  height: 44px;
  padding: 7px 25px 0 13px;
  color: #b0b0b0;
`;

const FootButton = styled.button`
  color: ${({ $on }) => ($on ? BLUE : 'inherit')};
`;

const SortGroup = styled.button`
  display: flex;
  align-items: center;
  gap: 10px;
`;

const FootTools = styled.div`
  display: flex;
  align-items: center;
  gap: 17px;
  margin-left: auto;
`;

const Slider = styled.input`
  appearance: none;
  width: ${({ $width }) => $width}px;
  height: 14px;
  background: linear-gradient(#454545, #454545) center / calc(100% - 12px) 2px no-repeat;
  &::-webkit-slider-thumb {
    appearance: none;
    width: 11px;
    height: 11px;
    border: 2px solid #9a9a9a;
    border-radius: 50%;
    background: ${PANEL};
    box-shadow: 0 0 0 2px ${PANEL};
  }
`;

const ToolPanel = styled(Panel)`
  width: 48px;
  align-items: center;
  padding-top: 16px;
  gap: 1px;
  color: #b0b0b0;
`;

const ToolButton = styled.button`
  position: relative;
  display: flex;
  justify-content: center;
  align-items: center;
  width: 28px;
  height: 26px;
  border: 1px solid transparent;
  border-radius: 2px;
  ${({ $active }) => $active && css`
    color: ${BLUE};
    background: #171717;
    border-color: ${LINE};
  `}
  ${({ $corner }) => $corner && css`
    &::after {
      content: "";
      position: absolute;
      right: 0;
      bottom: -1px;
      width: 3px;
      height: 3px;
      background: #999;
      clip-path: polygon(100% 0, 100% 100%, 0 100%);
    }
  `}
`;

const TimelineTab = styled.div`
  flex: none;
  display: flex;
  gap: 11px;
  height: 26px;
  padding-left: 10px;
  > button:first-child { padding-top: 3px; }
`;

const TimelineBody = styled.div`
  flex: 1;
  min-height: 0;
  display: flex;
`;

const HeadColumn = styled.div`
  width: 237px;
  display: flex;
  flex-direction: column;
`;

const TimelineTop = styled.div`
  flex: none;
  height: 47px;
  padding: 5px 0 0 18px;
`;

const TimelineButtons = styled.div`
  display: flex;
  padding-top: 3px;
`;

const TimelineButton = styled.button`
  display: flex;
  align-items: center;
  justify-content: center;
  width: 22px;
  height: 18px;
  margin-right: 12px;
  color: ${({ $on, $dim }) => ($on ? BLUE : $dim ? '#4c4c4c' : '#b0b0b0')};
`;

const HeadHalf = styled.div`
  flex: 1;
  display: flex;
  flex-direction: column;
  justify-content: ${({ $bottom }) => ($bottom ? 'flex-end' : 'flex-start')};
  background: #1b1b1b;
  border-right: 1px solid ${LINE};
  > div {
    ${({ $bottom }) => ($bottom ? 'border-top' : 'border-bottom')}: 1px solid ${LINE};
  }
`;

const HeadRow = styled.div`
  display: grid;
  grid-template-columns: 32px 20px 32px 27px 27px 27px 27px;
  justify-items: center;
  align-items: center;
  height: 25px;
  padding-left: 13px;
  background: #252525;
  color: #b0b0b0;
`;

const Patch = styled.button`
  width: 32px;
  height: 24px;
  font-size: 10px;
  color: #8f8f8f;
  background: ${({ $on }) => ($on ? '#075687' : 'transparent')};
`;

const MiniButton = styled.button`
  font-size: 10px;
`;

const MixRow = styled.div`
  display: flex;
  align-items: center;
  height: 25px;
  padding: 0 8px 0 51px;
  background: #252525;
  color: #b0b0b0;
  span {
    width: 86px;
    padding-left: 10px;
    color: #8f8f8f;
  }
  b {
    flex: 1;
    font-weight: 400;
    color: ${BLUE};
  }
  svg:last-child { margin-bottom: 8px; }
`;

const Splitter = styled.div`
  flex: none;
  height: 5px;
  background: #303030;
`;

const LaneColumn = styled.div`
  position: relative;
  flex: 1;
  min-width: 0;
  display: flex;
  flex-direction: column;
  overflow: hidden;
`;

const TimeRuler = styled.div`
  flex: none;
  display: flex;
  flex-direction: column;
  height: 47px;
  padding-top: 17px;
  border-bottom: 2px solid #eaea2c;
`;

const RulerLabels = styled.div`
  display: flex;
  margin-left: -74px;
  height: 16px;
  color: #8f8f8f;
  span {
    flex: none;
    width: 150px;
    text-align: center;
  }
`;

const RulerTicks = styled.div`
  display: flex;
  align-items: flex-end;
  height: 12px;
`;

const TimeTick = styled.i`
  flex: none;
  width: 30px;
  height: ${({ $major }) => ($major ? 12 : 6)}px;
  border-left: 1px solid #555;
`;

const LaneHalf = styled.div`
  flex: 1;
  display: flex;
  flex-direction: column;
  justify-content: ${({ $bottom }) => ($bottom ? 'flex-end' : 'flex-start')};
  background: #1b1b1b;
  > div {
    ${({ $bottom }) => ($bottom ? 'border-top' : 'border-bottom')}: 1px solid ${LINE};
  }
`;

const Lane = styled.div`
  height: 25px;
  background: #1f1f1f;
`;

const ClipBar = styled.div`
  position: relative;
  display: flex;
  align-items: flex-start;
  gap: 8px;
  height: 24px;
  padding: 3px 10px;
  background: #e283e2;
  color: #111;
  font-size: 9px;
  line-height: 12px;
  ${({ $selected }) => $selected && css`
    background: #a68fe0;
    box-shadow: inset 0 4px #e0dde2, inset 0 -4px #e0dde2, inset 4px 0 #e0dde2;
  `}
  &::before {
    content: "";
    position: absolute;
    left: 0;
    top: 0;
    width: 5px;
    height: 5px;
    background: linear-gradient(135deg, #1f1f1f 45%, #333 45% 60%, transparent 60%);
  }
`;

const FxBadge = styled.i`
  width: 11px;
  height: 11px;
  background: #777;
  border: 1px solid #999;
  font: italic 9px/9px "Liberation Serif", serif;
  text-align: center;
`;

const HoverLine = styled.i`
  position: absolute;
  left: 483px;
  top: 3px;
  width: 1px;
  height: 41px;
  background: #888;
`;

const PlayRange = styled.i`
  position: absolute;
  left: 121px;
  top: 42px;
  width: 32px;
  height: 3px;
  background: ${BLUE};
`;

const TimePlayhead = styled.i`
  position: absolute;
  left: 120px;
  top: 33px;
  bottom: 0;
  width: 1px;
  background: ${BLUE};
  &::before {
    content: "";
    position: absolute;
    left: -5px;
    width: 11px;
    height: 11px;
    border-radius: 1px 1px 4px 4px;
    background: ${BLUE};
  }
`;

const ScrollColumn = styled.div`
  flex: none;
  display: flex;
  flex-direction: column;
  width: 24px;
  padding: 49px 13px 0 1px;
`;

const TrackScroll = styled.div`
  flex: 1;
  display: flex;
  flex-direction: column;
  justify-content: space-between;
  align-items: center;
  padding: 2px 0;
  border-radius: 5px;
  background: #303030;
`;

const TimelineScroll = styled.div`
  flex: none;
  height: 11px;
  margin: 1px 24px 13px 13px;
  border: 1px solid ${LINE};
  border-radius: 5px;
  div {
    display: flex;
    justify-content: space-between;
    width: 32px;
    height: 10px;
    margin: -1px 0;
    border-radius: 5px;
    background: #303030;
  }
`;

const MeterArea = styled.div`
  flex: 1;
  display: flex;
  margin: 26px 0 0 13px;
`;

const MeterBox = styled.div`
  display: flex;
  flex-direction: column;
  justify-content: space-between;
  width: 97px;
  border: 1px solid #000;
  background: ${DARK};
`;

const MeterPeaks = styled.div`
  display: flex;
  height: 9px;
  border-bottom: 1px solid #000;
  i { flex: 1; }
  i + i { border-left: 1px solid #000; }
`;

const MeterBase = styled.div`
  display: flex;
  gap: 1px;
  i {
    flex: 1;
    height: 2px;
    background: #e6dc50;
    border-bottom: 1px solid #7a7420;
  }
`;

const MeterScale = styled.div`
  display: flex;
  flex-direction: column;
  margin: 11px 0 2px;
  font-size: 10px;
`;

const ScaleStep = styled.div`
  position: relative;
  flex: 1;
  display: flex;
  flex-direction: column;
  span {
    position: absolute;
    left: 7px;
    top: -8px;
  }
`;

const ScaleTick = styled.i`
  flex: 1;
  width: ${({ $major }) => ($major ? 4 : 2)}px;
  border-top: 1px solid #8f8f8f;
`;

const ScaleEnd = styled.div`
  display: flex;
  align-items: flex-start;
  gap: 4px;
  height: 1px;
  line-height: 0;
  i { flex: none; height: 1px; }
`;

const SoloRow = styled.div`
  display: flex;
  gap: 30px;
  margin: 3px 0 12px 28px;
  button {
    width: 18px;
    height: 18px;
    background: ${DARK};
    border: 1px solid ${LINE};
    border-radius: 2px;
    color: #b0b0b0;
    font-size: 10px;
    line-height: 14px;
  }
`;

const ClipSource = styled.div`
  flex: none;
  height: 51px;
  background: ${DARK};
  border: solid ${LINE};
  border-width: 1px 0;
`;

const SourceLine = styled.div`
  display: flex;
  align-items: center;
  gap: 6px;
  height: 25px;
  padding-left: 10px;
  white-space: nowrap;
  a {
    color: ${BLUE};
    text-decoration: none;
  }
`;

const EffectLine = styled.div`
  display: flex;
  align-items: center;
  gap: 12px;
  padding-left: 14px;
  color: #555;
`;

const Section = styled.div`
  flex: none;
  display: flex;
  justify-content: space-between;
  height: 41px;
  margin-right: 13px;
  padding: 12px 14px 0 12px;
  border-bottom: 1px solid ${({ $last }) => ($last ? 'transparent' : LINE)};
  span { padding-top: 2px; }
`;

const CreativeSection = styled.div`
  flex: none;
  border-bottom: 1px solid ${LINE};
  margin-right: 13px;
  ${Section} { margin-right: 0; }
`;

const Check = styled.input`
  appearance: none;
  position: relative;
  width: 14px;
  height: 14px;
  border-radius: 2px;
  background: #8f8f8f;
  &:checked::after {
    content: "";
    position: absolute;
    left: 5px;
    top: 1px;
    width: 5px;
    height: 9px;
    border: solid #1d1d1d;
    border-width: 0 2px 2px 0;
    transform: rotate(42deg);
  }
`;

const LookRow = styled.div`
  display: flex;
  align-items: center;
  gap: 7px;
  height: 19px;
  padding: 1px 0 0 28px;
`;

const Preview = styled.div`
  display: flex;
  justify-content: space-between;
  align-items: center;
  width: 293px;
  height: 165px;
  margin: 12px 0 4px 40px;
  padding: 0 4px;
  background: #000;
  color: #484848;
  button:last-child { color: #fff; }
`;

const ControlRow = styled.div`
  display: flex;
  align-items: center;
  height: 26px;
  padding-left: 28px;
  label { width: 74px; }
  output { color: ${BLUE}; }
`;

const AdjustTitle = styled.button`
  display: flex;
  align-items: center;
  gap: 6px;
  height: 26px;
  margin-top: 5px;
  padding-left: 13px;
`;

const Wheels = styled.div`
  display: flex;
  gap: 49px;
  margin: 12px 0 5px 69px;
  figure {
    margin: 0;
    width: 93px;
  }
  figcaption {
    height: 20px;
    line-height: 20px;
    text-align: center;
    white-space: nowrap;
    color: #a5a5a5;
  }
`;

const Wheel = styled.div`
  height: 93px;
  border-radius: 50%;
  background:
    radial-gradient(circle, ${PANEL} 27px, transparent 28px),
    radial-gradient(circle, rgba(90, 90, 90, 0.45) 27px, transparent 44px),
    conic-gradient(#f00, #f0f, #00f, #0ff, #0f0, #ff0, #f00);
`;

const StatusBar = styled.footer`
  position: relative;
  flex: none;
  display: flex;
  align-items: center;
  gap: 38px;
  height: 20px;
  padding-left: 2px;
  background: #252525;
  color: #8f8f8f;
  svg { color: #c4c4c4; }
`;

/* sliver of the hidden taskbar */
const TaskEdge = styled.i`
  position: absolute;
  inset: auto 0 0;
  height: 2px;
  background: linear-gradient(90deg, transparent 48px, #eee 48px 392px, transparent 392px 1718px, #777 1718px 1767px, transparent 1767px);
`;

const metal = css`
  background:
    repeating-linear-gradient(rgba(255, 255, 255, 0.12) 0 1px, transparent 1px 3px, rgba(0, 0, 0, 0.04) 3px 4px),
    linear-gradient(90deg, #b4b4b4, #c6c6c6 15%, #e6e6e6 50%, #cacaca 85%, #b4b4b4);
`;

const PlayerWindow = styled.section`
  position: absolute;
  left: 331px;
  top: 207px;
  width: 734px;
  border: 1px solid #7c7c7c;
  border-radius: 5px 5px 3px 3px;
  overflow: hidden;
  color: #444;
  ${metal}
`;

const PlayerTitle = styled.div`
  position: relative;
  display: flex;
  justify-content: center;
  align-items: center;
  height: 24px;
  border-top: 1px solid #ddd;
  border-bottom: 1px solid #6d6d6d;
  background: linear-gradient(#b6b6b6, #9c9c9c);
  font: bold 13px/16px "Liberation Sans", sans-serif;
`;

const PlayerButtons = styled.div`
  position: absolute;
  right: 4px;
  top: 3px;
  display: flex;
  gap: 4px;
  button {
    display: flex;
    align-items: center;
    justify-content: center;
    width: 16px;
    height: 16px;
    border: 1px solid #666;
    border-radius: 3px;
    background: linear-gradient(#e0e0e0, #a0a0a0);
  }
`;

const PlayerMenu = styled.div`
  display: flex;
  gap: 10px;
  height: 17px;
  padding-left: 5px;
  font-size: 10px;
`;

const PlayerScreen = styled.div`
  display: flex;
  justify-content: center;
  align-items: center;
  height: 480px;
  margin: 0 6px;
  background: #000;
  color: #fff;
  font: bold 65px/72px "Liberation Sans", sans-serif;
`;

const PlayerLcd = styled.div`
  display: flex;
  align-items: center;
  height: 24px;
  margin: 3px 5px 0;
  padding: 0 9px 0 16px;
  border: 1px solid #8f9370;
  background: linear-gradient(#c4c9a0, #d6dab4 30%, #c9cea6 50%, #d6dab6);
  color: #222;
  font: 11px/16px "Liberation Sans", sans-serif;
  div {
    position: relative;
    flex: 1;
    height: 8px;
    margin-left: 23px;
    border: 1px solid #8f9370;
    background: #aeb38b;
  }
  svg {
    position: absolute;
    left: -6px;
    top: -5px;
  }
`;

const PlayerFoot = styled.div`
  position: relative;
  display: grid;
  grid-template-columns: 1fr auto 1fr;
  align-items: start;
  height: 54px;
`;

const FootCurve = styled.svg`
  position: absolute;
  inset: 0;
  width: 100%;
  height: 100%;
`;

const Volume = styled.div`
  position: relative;
  display: flex;
  align-items: center;
  gap: 1px;
  padding: 5px 0 0 5px;
  input {
    appearance: none;
    width: 50px;
    height: 14px;
    background: linear-gradient(#666, #666) center / 100% 2px no-repeat;
  }
  input::-webkit-slider-thumb {
    appearance: none;
    width: 12px;
    height: 12px;
    border: 1px solid #555;
    border-radius: 50%;
    background: radial-gradient(circle, #333 2px, #f0f0f0 3px);
  }
`;

const PlayerKeys = styled.div`
  position: relative;
  display: flex;
  gap: 7px;
  padding-top: 8px;
`;

const RoundButton = styled.button`
  display: flex;
  align-items: center;
  justify-content: center;
  width: ${({ $size }) => $size}px;
  height: ${({ $size }) => $size}px;
  border: 1px solid #777;
  border-radius: 50%;
  background: radial-gradient(circle at 50% 20%, #fff, #f2f2f2 50%, #c4c4c4);
  box-shadow: 0 0 0 1px #aaa;
  color: #333;
`;

const Grip = styled.svg`
  position: absolute;
  right: 3px;
  bottom: 3px;
`;

export default App;
